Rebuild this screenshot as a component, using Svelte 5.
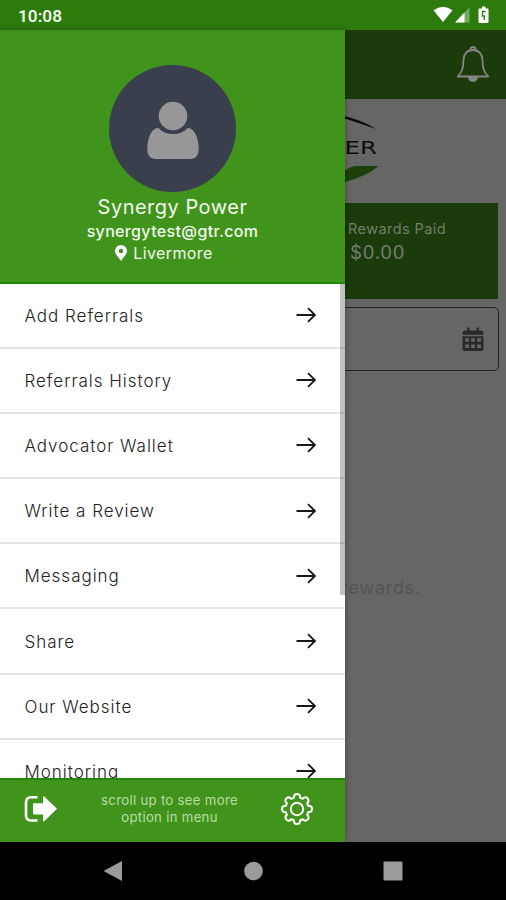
<script>
	const MENU_ITEMS = [
		'Add Referrals',
		'Referrals History',
		'Advocator Wallet',
		'Write a Review',
		'Messaging',
		'Share',
		'Our Website',
		'Monitoring'
	];

	const user = {
		name: 'Synergy Power',
		email: 'synergytest@gtr.com',
		city: 'Livermore'
	};
</script>

<div class="phone">
	<div class="status-bar">
		<span class="clock">10:08</span>
		<svg class="status-icons" viewBox="0 0 60 20" aria-hidden="true">
			<path d="M0.500 5.200Q10 -1.800 19.500 5.200L10 17Z" fill="#fff" />
			<path d="M36.500 2.500V17.500H22Z" fill="#fff" opacity="0.35" />
			<path d="M31.500 7.500V17.500H22Z" fill="#fff" />
			<path d="M49 1.500h3.500v2h2q1 0 1 1V17q0 1-1 1H46.500q-1 0-1-1V4.500q0-1 1-1H49Z" fill="#fff" />
			<path d="M52.500 6.500H49.500V11H51.300V15" fill="none" stroke="#2d7b0c" stroke-width="1.300" />
		</svg>
	</div>

	<div class="screen">
		<main class="page">
			<header class="app-bar">
				<svg class="bell" viewBox="0 0 34 38" aria-hidden="true">
					<path d="M14.500 4.500V3.500a2.500 2.500 0 0 1 5 0v1" />
					<path d="M17 4C11 4 7.500 8.500 7.500 14C7.500 22.500 5.800 26 1.800 30.500H32.200C28.200 26 26.500 22.500 26.500 14C26.500 8.500 23 4 17 4Z" />
					<path class="clapper" d="M12 31h10a5 5 0 0 1-10 0Z" />
				</svg>
			</header>

			<div class="brand">
				<svg class="logo" viewBox="0 0 104 80" aria-hidden="true">
					<path d="M0 14Q30 2 60 7.200Q77 11 91 20Q75 14.500 60 9.500Q34 6 0 14Z" fill="#0b0b0b" />
					<path d="M0 78Q34 72 60 61.500Q66 57 72 57H93.500Q82 67 60 73Q34 79 0 78Z" fill="#1c400a" />
					<text transform="translate(92 44.500) scale(1.400 1)">POWER</text>
				</svg>
			</div>

			<section class="rewards">
				<span class="rewards-label">Rewards Paid</span>
				<span class="rewards-total">$0.00</span>
			</section>

			<div class="date-field">
				<svg class="calendar" viewBox="0 0 22 24" aria-hidden="true">
					<path d="M5 0.500h2.500v3h7v-3H17v3h2q2.500 0 2.500 2.500v1.700H0.500V6Q0.500 3.500 3 3.500H5Z" />
					<path fill-rule="evenodd" d="M0.500 9.200h21V22q0 2-2 2h-17q-2 0-2-2ZM3.200 11.300v3.500h3.700v-3.500ZM9.200 11.300v3.500h3.700v-3.500ZM15.200 11.300v3.500h3.700v-3.500ZM3.200 17.600v3.500h3.700v-3.500ZM9.200 17.600v3.500h3.700v-3.500ZM15.200 17.600v3.500h3.700v-3.500Z" />
				</svg>
			</div>

			<p class="empty">No rewards.</p>
		</main>

		<aside class="drawer">
			<div class="profile">
				<div class="avatar">
					<svg viewBox="0 0 52 58" aria-hidden="true">
						<circle cx="26" cy="15" r="14.300" />
						<path d="M11.500 27C15 31 20 33 26 33S37 31 40.500 27C47 27 51.500 35 51.700 48C51.700 54 49 58 43 58H9C3 58 0.300 54 0.300 48C0.500 35 5 27 11.500 27Z" />
					</svg>
				</div>
				<span class="name">{user.name}</span>
				<span class="email">{user.email}</span>
				<span class="city">
					<svg viewBox="0 0 12 16" aria-hidden="true">
						<path fill-rule="evenodd" d="M6 0a6 6 0 0 1 6 6c0 3.500-3.500 6-6 10C3.500 12 0 9.500 0 6a6 6 0 0 1 6-6ZM6 3.800a2.200 2.200 0 1 0 0 4.400a2.200 2.200 0 0 0 0-4.400Z" />
					</svg>
					<span>{user.city}</span>
				</span>
			</div>

			<nav class="menu">
				{#each MENU_ITEMS as item (item)}
					<a class="menu-item" href="#top">
						<span>{item}</span>
						<svg viewBox="0 0 20 16" aria-hidden="true">
							<path d="M0.500 8H19M12 1.200L19 8L12 14.800" />
						</svg>
					</a>
				{/each}
				<div class="scrollbar"></div>
			</nav>

			<footer class="drawer-footer">
				<svg class="logout" viewBox="0 0 34 28" aria-hidden="true">
					<path class="frame" d="M13.500 2.200H7Q2 2.200 2 8V20Q2 25.500 7 25.500H13.500" />
					<path class="arrow" d="M9 9.500q0-1.300 1.300-1.300H19V2.500q0-2 1.500-.8L33 13.800L20.500 26q-1.500 1.200-1.500-.8V19.500H10.300Q9 19.500 9 18.200Z" />
				</svg>
				<p>scroll up to see more<br />option in menu</p>
				<svg class="gear" viewBox="-16 -16 32 32" aria-hidden="true">
					<path d="M-3.200 -11.200Q-3.200 -15 0 -15T3.200 -11.200Q4.300 -10.900 5.700 -10.200Q8.400 -12.900 10.600 -10.600T10.200 -5.700Q10.900 -4.300 11.200 -3.200Q15 -3.200 15 0T11.200 3.200Q10.900 4.300 10.200 5.700Q12.900 8.400 10.600 10.600T5.700 10.200Q4.300 10.900 3.200 11.200Q3.200 15 0 15T-3.200 11.200Q-4.300 10.900 -5.700 10.200Q-8.400 12.900 -10.600 10.600T-10.200 5.700Q-10.900 4.300 -11.200 3.200Q-15 3.200 -15 0T-11.200 -3.200Q-10.900 -4.300 -10.200 -5.700Q-12.900 -8.400 -10.600 -10.600T-5.700 -10.200Q-4.300 -10.900 -3.200 -11.200Z" />
					<circle r="6.200" />
				</svg>
			</footer>
		</aside>
	</div>

	<div class="nav-bar">
		<svg viewBox="0 0 20 20" aria-hidden="true"><path d="M19 0V20L0.500 10Z" /></svg>
		<svg viewBox="0 0 20 20" aria-hidden="true"><circle cx="10.500" cy="10" r="9.300" /></svg>
		<svg viewBox="0 0 20 20" aria-hidden="true"><rect x="0.500" y="0.500" width="19" height="19" rx="1" /></svg>
	</div>
</div>

<style>
	:global(body) {
		margin: 0;
		background: #000;
	}

	.phone {
		width: 506px;
		height: 900px;
		display: flex;
		flex-direction: column;
		overflow: hidden;
		font-family: 'Inter', 'Roboto', sans-serif;
	}

	.status-bar {
		box-sizing: border-box;
		height: 30px;
		flex: none;
		padding: 0 12px 0 18px;
		display: flex;
		align-items: center;
		justify-content: space-between;
		background: #2d7b0c;
	}

	.clock {
		padding-top: 2px;
		color: #edf6e8;
		font-family: 'Roboto', sans-serif;
		font-size: 17.2px;
		font-weight: 600;
	}

	.status-icons {
		width: 60px;
		height: 20px;
		margin-right: 1px;
	}

	.screen {
		position: relative;
		height: 812px;
		flex: none;
	}

	.page {
		height: 100%;
		display: flex;
		flex-direction: column;
		background: #666;
	}

	.app-bar {
		box-sizing: border-box;
		height: 69px;
		flex: none;
		padding: 16px 16px 0;
		display: flex;
		justify-content: flex-end;
		align-items: flex-start;
		background: #1c3b0b;
	}

	.bell {
		width: 34px;
		height: 38px;
		fill: none;
		stroke: #858585;
		stroke-width: 1.8;
		stroke-linejoin: round;
	}

	.bell .clapper {
		fill: #858585;
		stroke: none;
	}

	.brand {
		height: 104px;
		flex: none;
		padding-left: 285px;
	}

	.logo {
		width: 104px;
		height: 80px;
		margin-top: 10px;
	}

	.logo text {
		fill: #0b0b0b;
		font-family: 'DejaVu Sans', sans-serif;
		font-size: 17.5px;
		text-anchor: end;
	}

	.rewards {
		box-sizing: border-box;
		height: 96px;
		flex: none;
		margin: 0 8px 0 253px;
		padding: 16px 0 0 95px;
		display: flex;
		flex-direction: column;
		background: #1c3b0b;
		color: #727d6d;
	}

	.rewards-label {
		font-size: 14.5px;
		line-height: 20px;
		letter-spacing: 0.42px;
		white-space: nowrap;
	}

	.rewards-total {
		padding-left: 2px;
		font-size: 18.5px;
		line-height: 26px;
		letter-spacing: 0.8px;
	}

	.date-field {
		box-sizing: border-box;
		height: 64px;
		flex: none;
		margin: 8px 7.5px 0;
		padding-right: 14px;
		display: flex;
		align-items: center;
		justify-content: flex-end;
		border: 1.5px solid #202020;
		border-radius: 5px;
	}

	.calendar {
		width: 22px;
		height: 24px;
		fill: #2a2a2a;
	}

	.empty {
		margin: 206px 0 0;
		padding-right: 85px;
		color: #545454;
		font-size: 18px;
		line-height: 22px;
		letter-spacing: 0.8px;
		text-align: right;
	}

	.drawer {
		position: absolute;
		top: 0;
		left: 0;
		width: 345px;
		height: 100%;
		display: flex;
		flex-direction: column;
		background: #fff;
		box-shadow: 0 0 6px rgba(0, 0, 0, 0.35);
	}

	.profile {
		box-sizing: border-box;
		height: 253.5px;
		flex: none;
		padding-top: 35px;
		display: flex;
		flex-direction: column;
		align-items: center;
		border-bottom: 2px solid #23850c;
		background: #41941b;
		color: #f2f9ee;
	}

	.avatar {
		width: 127px;
		height: 127px;
		display: flex;
		align-items: center;
		justify-content: center;
		border-radius: 50%;
		background: #393f4d;
	}

	.avatar svg {
		width: 52px;
		height: 58px;
		margin-top: 2px;
		fill: #979797;
	}

	.name {
		margin-top: 2px;
		font-size: 20px;
		line-height: 26px;
		letter-spacing: 0.5px;
	}

	.email {
		font-size: 16px;
		font-weight: 500;
		line-height: 22px;
		letter-spacing: 0.35px;
	}

	.city {
		display: flex;
		align-items: center;
		gap: 6px;
		margin-right: 17px;
		font-size: 16px;
		line-height: 22px;
		letter-spacing: 0.4px;
	}

	.city svg {
		width: 12px;
		height: 16px;
		fill: #fff;
	}

	.menu {
		position: relative;
		flex: 1;
		min-height: 0;
		overflow: hidden;
	}

	.menu-item {
		box-sizing: border-box;
		height: 65.2px;
		padding: 1px 29px 0 24.5px;
		display: flex;
		align-items: center;
		justify-content: space-between;
		border-bottom: 2px solid #e4e4e4;
		color: #222;
		font-size: 17px;
		font-weight: 300;
		letter-spacing: 0.98px;
		text-decoration: none;
	}

	.menu-item svg {
		width: 20px;
		height: 16px;
		margin-bottom: 1px;
		fill: none;
		stroke: #181818;
		stroke-width: 1.8;
	}

	.scrollbar {
		position: absolute;
		top: 0;
		right: 0;
		width: 5px;
		height: 311px;
		background: rgba(0, 0, 0, 0.24);
	}

	.drawer-footer {
		box-sizing: border-box;
		height: 64.5px;
		flex: none;
		padding: 0 32px 3px 24px;
		display: flex;
		align-items: center;
		justify-content: space-between;
		border-top: 2px solid #23850c;
		background: #41941b;
	}

	.drawer-footer p {
		margin: 0;
		color: #b9dca6;
		font-size: 13.2px;
		line-height: 17.5px;
		letter-spacing: 0.3px;
		text-align: center;
	}

	.logout {
		width: 34px;
		height: 28px;
	}

	.logout .frame {
		fill: none;
		stroke: #fff;
		stroke-width: 2.6;
	}

	.logout .arrow {
		fill: #fff;
	}

	.gear {
		width: 32px;
		height: 32px;
		fill: none;
		stroke: #fff;
		stroke-width: 2;
	}

	.nav-bar {
		height: 58px;
		flex: none;
		display: flex;
		align-items: center;
		justify-content: center;
		gap: 120px;
		background: #000;
	}

	.nav-bar svg {
		width: 20px;
		height: 20px;
		fill: #9b9b9b;
	}
</style>
